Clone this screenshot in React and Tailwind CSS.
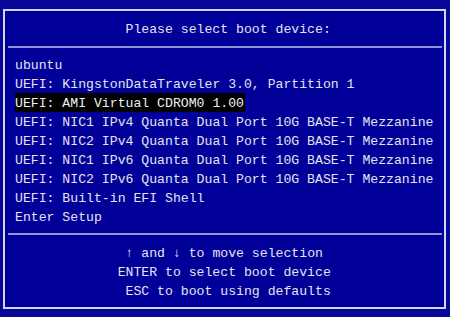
/**
 * Boot menu - sélection du périphérique de démarrage
 */

const bootItems = [
  'ubuntu',
  'UEFI: KingstonDataTraveler 3.0, Partition 1',
  'UEFI: AMI Virtual CDROM0 1.00',
  'UEFI: NIC1 IPv4 Quanta Dual Port 10G BASE-T Mezzanine',
  'UEFI: NIC2 IPv4 Quanta Dual Port 10G BASE-T Mezzanine',
  'UEFI: NIC1 IPv6 Quanta Dual Port 10G BASE-T Mezzanine',
  'UEFI: NIC2 IPv6 Quanta Dual Port 10G BASE-T Mezzanine',
  'UEFI: Built-in EFI Shell',
  'Enter Setup',
];

const selected = 2;

export default function App() {
  return (
    <div
      className="w-[450px] h-[317px] bg-[#07079a] pt-[9px] pl-[3px] overflow-hidden text-[#e4e4ee] text-[13.16px] leading-[19px] whitespace-pre"
      style={{ fontFamily: '"Liberation Mono", monospace' }}
    >
      <div className="w-[443px] h-[300px] bg-[#000099] border-2 border-[#d4d4ee] flex flex-col">
        {/* Titre */}
        <div className="h-[35px] pt-[9px]">
          <div className="ml-[10px] pl-[14ch]">Please select boot device:</div>
        </div>
        <div className="h-[2px] ml-[3px] mr-[2px] bg-[#9494d4]" />

        {/* Liste des périphériques */}
        <div className="pt-[7px] pb-[7px] pl-[10px]">
          {bootItems.map((item, i) => (
            <div key={item} className="h-[19px]">
              <span className={i === selected ? 'inline-block bg-black pr-[1px] pt-[1px] h-[19px] leading-[19px] text-[#f0f0f0]' : 'inline-block pt-[1px]'}>
                {item}
              </span>
            </div>
          ))}
        </div>
        <div className="h-[2px] ml-[3px] mr-[2px] bg-[#9494d4]" />

        {/* Aide */}
        <div className="pt-[9px] pl-[10px]">
          <div className="pl-[14ch]">
            <span className="font-bold">↑</span> and <span className="font-bold">↓</span> to move selection
          </div>
          <div className="pl-[13ch]">ENTER to select boot device</div>
          <div className="pl-[14ch]">ESC to boot using defaults</div>
        </div>
      </div>
    </div>
  );
}
